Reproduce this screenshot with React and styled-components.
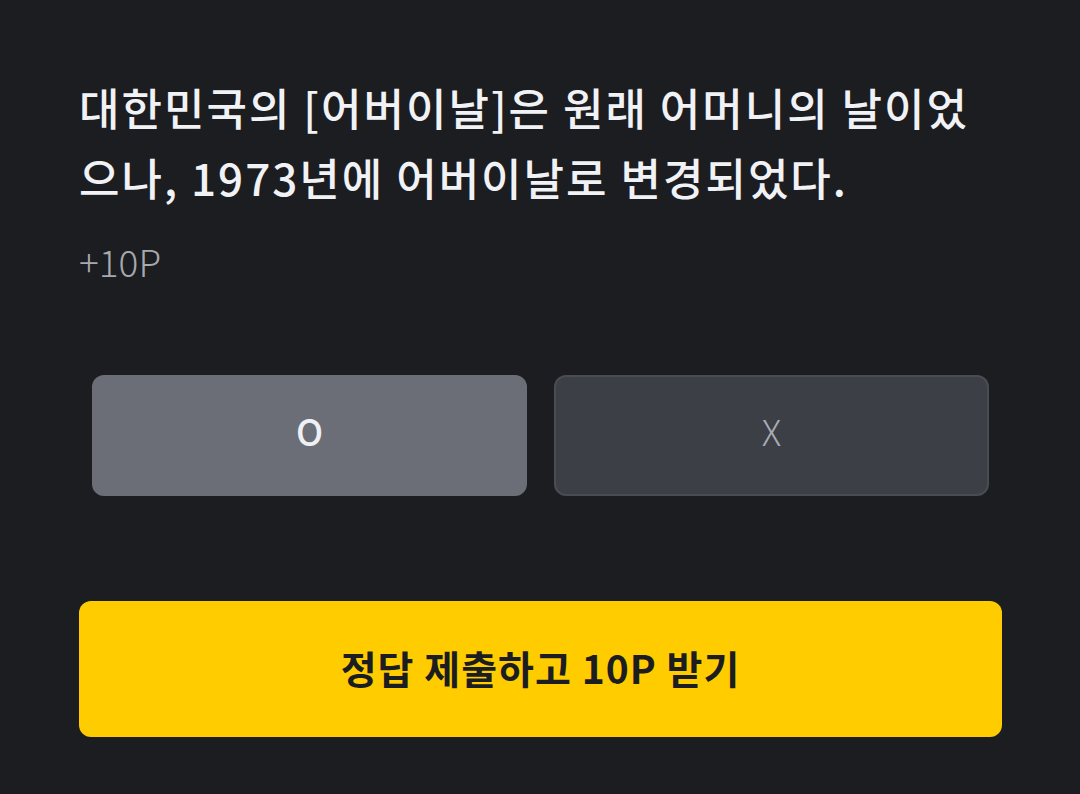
import React, { useState } from "react";
import styled, { createGlobalStyle } from "styled-components";

const GlobalStyle = createGlobalStyle`
  html, body {
    margin: 0;
    padding: 0;
    background: #1c1d21;
  }
  body {
    font-family: "Noto Sans CJK KR", "Noto Sans", sans-serif;
  }
  * { box-sizing: border-box; }
`;

const Page = styled.div`
  width: 1080px;
  height: 794px;
  background: #1c1d21;
  padding: 72px 78px 0 79px;
  display: flex;
  flex-direction: column;
`;

const Question = styled.h1`
  margin: 0;
  font-size: 44px;
  font-weight: 500;
  line-height: 70px;
  color: #f1f2f5;
  word-break: break-all;
  letter-spacing: 2px;
`;

const Reward = styled.div`
  margin-top: 24px;
  font-size: 37px;
  font-weight: 300;
  line-height: 50px;
  color: #a6a9af;
`;

const Choices = styled.div`
  margin-top: 89px;
  padding: 0 13px;
  display: grid;
  grid-template-columns: 1fr 1fr;
  gap: 27px;
`;

const Choice = styled.button`
  height: 121px;
  border-radius: 12px;
  border: 2px solid ${(p) => (p.$selected ? "#6b6e76" : "#4a4c54")};
  background: ${(p) => (p.$selected ? "#6b6e76" : "#3d3f47")};
  color: ${(p) => (p.$selected ? "#eef0f5" : "#a9acb3")};
  font-family: "Noto Sans CJK KR", "Noto Sans", sans-serif;
  font-size: 36px;
  font-weight: ${(p) => (p.$selected ? 500 : 300)};
  line-height: 1;
  display: flex;
  align-items: center;
  justify-content: center;
  padding: 0 0 12px;
  cursor: pointer;
`;

const Submit = styled.button`
  margin-top: 105px;
  height: 136px;
  border: none;
  border-radius: 12px;
  background: #ffcc00;
  color: #1c1d21;
  font-family: "Noto Sans CJK KR", "Noto Sans", sans-serif;
  font-size: 39px;
  font-weight: 700;
  letter-spacing: 1px;
  display: flex;
  align-items: center;
  justify-content: center;
  padding: 0 0 4px;
  cursor: pointer;
`;

export default function App() {
  const [answer, setAnswer] = useState("O");
  return (
    <>
      <GlobalStyle />
      <Page>
        <Question>
          대한민국의 [어버이날]은 원래 어머니의 날이었으나, 1973년에 어버이날로 변경되었다.
        </Question>
        <Reward>+10P</Reward>
        <Choices>
          <Choice $selected={answer === "O"} onClick={() => setAnswer("O")}>O</Choice>
          <Choice $selected={answer === "X"} onClick={() => setAnswer("X")}>X</Choice>
        </Choices>
        <Submit>정답 제출하고 10P 받기</Submit>
      </Page>
    </>
  );
}
